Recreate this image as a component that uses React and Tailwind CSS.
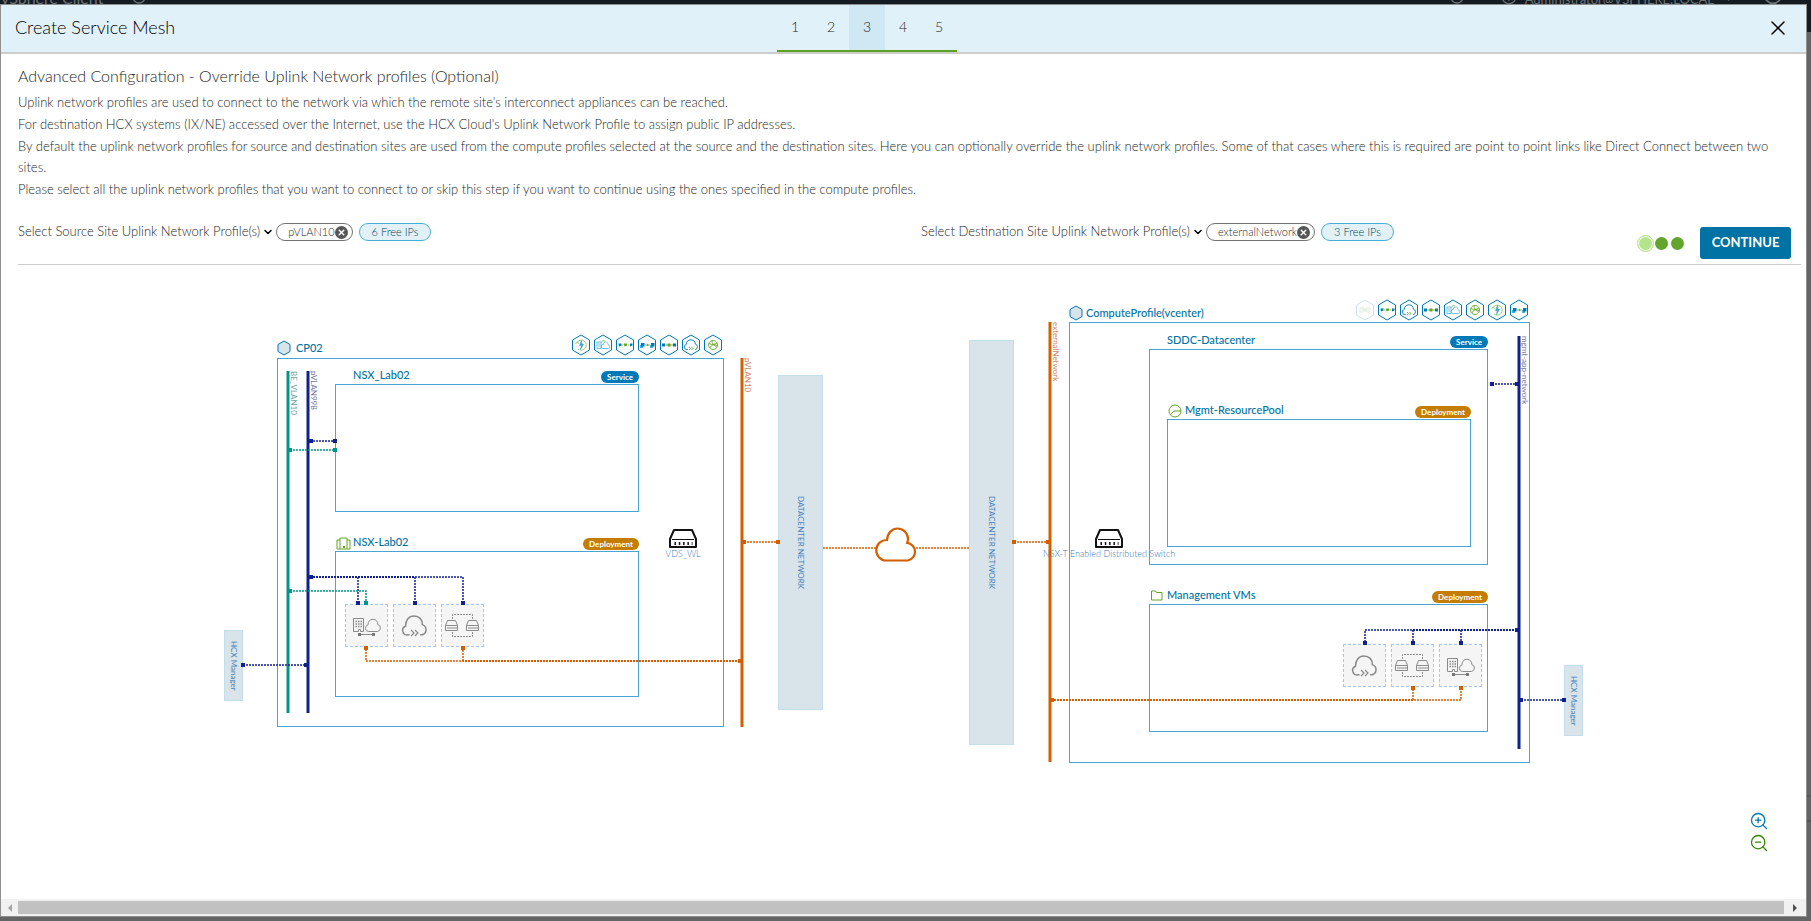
import React from "react";
import { ChevronDown, CircleHelp, RotateCw, Smile, ZoomIn, ZoomOut, X } from "lucide-react";

const STEPS = [1, 2, 3, 4, 5];
const ACTIVE_STEP = 3;

const NAVY = "#10218b";
const TEAL = "#00968b";
const ORANGE = "#d45f00";

// Topology data, in canvas pixels
const BOXES = [
  { id: "cp02", x: 53, y: 78, w: 447, h: 369 },
  { id: "nsx-service", x: 111, y: 104, w: 304, h: 128, badge: "Service" },
  { id: "nsx-deploy", x: 111, y: 271, w: 304, h: 146, badge: "Deployment" },
  { id: "compute", x: 845, y: 42, w: 461, h: 441 },
  { id: "sddc", x: 925, y: 69, w: 339, h: 216, badge: "Service" },
  { id: "pool", x: 943, y: 139, w: 304, h: 128, badge: "Deployment" },
  { id: "vms", x: 925, y: 324, w: 339, h: 128, badge: "Deployment" },
];

const TITLES = [
  { text: "CP02", x: 72, y: 60 },
  { text: "NSX_Lab02", x: 129, y: 87 },
  { text: "NSX-Lab02", x: 129, y: 254 },
  { text: "ComputeProfile(vcenter)", x: 862, y: 25 },
  { text: "SDDC-Datacenter", x: 943, y: 52 },
  { text: "Mgmt-ResourcePool", x: 961, y: 122 },
  { text: "Management VMs", x: 943, y: 307 },
];

const BLOCKS = [
  { id: "hcx-source", text: "HCX Manager", x: 0, y: 350, w: 19, h: 71 },
  { id: "dc-source", text: "DATACENTER NETWORK", x: 554, y: 95, w: 45, h: 335 },
  { id: "dc-target", text: "DATACENTER NETWORK", x: 745, y: 60, w: 45, h: 405 },
  { id: "hcx-target", text: "HCX Manager", x: 1340, y: 385, w: 19, h: 71 },
];

const TRUNKS = [
  { text: "BE_VLAN10", x: 64, y1: 91, y2: 433, color: TEAL, tone: "text-[#6f9f9c]" },
  { text: "pVLAN998", x: 84, y1: 91, y2: 433, color: NAVY, tone: "text-[#74789e]" },
  { text: "pVLAN10", x: 518, y1: 78, y2: 447, color: ORANGE, tone: "text-[#d3836a]" },
  { text: "externalNetwork", x: 826, y1: 42, y2: 482, color: ORANGE, tone: "text-[#d3836a]" },
  { text: "mgmt-app-network", x: 1295, y1: 56, y2: 469, color: NAVY, tone: "text-[#74789e]" },
];

const LINKS = [
  { d: "M86 161H111", color: NAVY, ends: [[87, 161], [111, 161]] },
  { d: "M66 170H111", color: TEAL, ends: [[66, 170], [111, 170]] },
  { d: "M86 297H239V323M134 297V323M191 297V323", color: NAVY, ends: [[87, 297], [134, 323], [191, 323], [239, 323]] },
  { d: "M66 311H142V323", color: TEAL, ends: [[66, 311], [142, 323]] },
  { d: "M516 381H142V368M239 381V368", color: ORANGE, ends: [[142, 368], [239, 368], [516, 381]] },
  { d: "M19 385H82", color: NAVY, ends: [[19, 385], [82, 385]] },
  { d: "M520 262H554", color: ORANGE, ends: [[520, 262], [554, 262]] },
  { d: "M599 268H653M692 268H746", color: ORANGE, ends: [] },
  { d: "M790 262H824", color: ORANGE, ends: [[790, 262], [824, 262]] },
  { d: "M1268 104H1294", color: NAVY, ends: [[1268, 104], [1293, 104]] },
  { d: "M1293 350H1141V363M1189 350V363M1237 350V363", color: NAVY, ends: [[1293, 350], [1141, 363], [1189, 363], [1237, 363]] },
  { d: "M827 420H1237V408M1189 420V408", color: ORANGE, ends: [[828, 420], [1189, 408], [1237, 408]] },
  { d: "M1297 420H1340", color: NAVY, ends: [[1297, 420], [1340, 420]] },
];

// Stretches shared by several links are drawn heavier
const SHARED = [
  { d: "M86 297H191", color: NAVY },
  { d: "M516 381H239", color: ORANGE },
  { d: "M1293 350H1189", color: NAVY },
  { d: "M827 420H1189", color: ORANGE },
];

const APPLIANCES = [
  { kind: "interconnect", x: 121, y: 324 },
  { kind: "wan", x: 169, y: 324 },
  { kind: "extension", x: 217, y: 324 },
  { kind: "wan", x: 1119, y: 364 },
  { kind: "extension", x: 1167, y: 364 },
  { kind: "interconnect", x: 1215, y: 364 },
];

const SWITCHES = [
  { text: "VDS_WL", x: 459, y: 249 },
  { text: "NSX-T Enabled Distributed Switch", x: 885, y: 249 },
];

const SOURCE_SERVICES = ["bolt", "hybrid", "link", "stack", "squares", "cloud", "globe"];
const TARGET_SERVICES = ["faded", "link", "cloud", "squares", "hybrid", "globe", "bolt", "stack"];

function ServiceGlyph({ kind }) {
  switch (kind) {
    case "bolt":
      return (
        <>
          <path d="M5 8.500A5 5 0 1 1 6 15M3.500 10 5 8l2 1.500" fill="none" stroke="#8cc466" strokeWidth="0.9" />
          <path d="M9.500 6.500 7.500 11.500h1.700L8.500 15.500 11.500 10H9.700z" fill="#49afd9" stroke="#0079b8" strokeWidth="0.4" />
        </>
      );
    case "hybrid":
      return (
        <>
          <path d="M3 8h4v6.500H3zM4 10h2M4 12h2M9 14.500a2 2 0 0 1 .3-4C9.500 8.500 10.500 8 11.700 8s2.300 1 2.300 2.700a2 2 0 0 1 .5 3.800z" fill="none" stroke="#49afd9" strokeWidth="0.8" />
          <path d="M7 8.500a3 3 0 0 1 4-1.500" fill="none" stroke="#8cc466" />
        </>
      );
    case "link":
      return (
        <>
          <path d="M4 11h11" stroke="#79b94b" strokeDasharray="1 1" />
          <path d="M2.500 9.500h3v2l-2.500 1zM14 9.500h2.500v2l-2.500 1z" fill="#0079b8" />
          <path d="M8 9.500h3v2l-2.500 1z" fill="#62a420" />
        </>
      );
    case "stack":
      return (
        <>
          <path d="M7 11h5" stroke="#79b94b" />
          <path d="M2 11h3v3H2zM12 11h3v3h-3z" fill="#49afd9" />
          <path d="M3 9h3.500v3.500H3zM13 9h3.500v3.500H13z" fill="#0079b8" />
          <path d="M9 9.500 10.500 11 9 12.500z" fill="#62a420" />
        </>
      );
    case "squares":
      return (
        <>
          <path d="M4 11h11" stroke="#62a420" strokeWidth="0.8" />
          <path d="M2 9.500h3v3H2zM13 9.500h3v3h-3z" fill="#0079b8" />
          <path d="M7.500 9.500h3v3h-3z" fill="#62a420" />
        </>
      );
    case "cloud":
      return (
        <>
          <path d="M6 15.500H5.200a2.600 2.600 0 0 1-.9-5.100C4.300 7.500 6.300 5.800 8.900 5.800s4.500 1.700 4.400 4.300a2.800 2.800 0 0 1 .2 5.400H13" fill="none" stroke="#0079b8" strokeWidth="0.9" />
          <path d="M7 13l1.500 1.500L7 16M9.500 13l1.500 1.500L9.500 16" fill="none" stroke="#62a420" strokeWidth="0.9" />
        </>
      );
    case "globe":
      return (
        <path
          d="M9 6.500a4.500 4.500 0 1 0 .1 0M5 9.500c3 1.500 5.500 1 8-.5M6 14c1-3 4-4 7-2.500M8 7c0 2 1 3.500 4.500 6"
          fill="none"
          stroke="#62a420"
          strokeWidth="0.9"
        />
      );
    default:
      return <path d="M4 9h4v4H4zM10 9h4v4h-4zM5 11h8" fill="none" stroke="#dbe9d6" strokeWidth="0.8" />;
  }
}

function ServiceIcon({ kind }) {
  const faded = kind === "faded";
  return (
    <svg viewBox="0 0 18 22" className="h-[22px] w-[18px]">
      <path d="M9 1 17.500 6v10L9 21 .5 16V6z" fill="#fff" stroke={faded ? "#c9e1ef" : "#0079b8"} />
      <ServiceGlyph kind={kind} />
    </svg>
  );
}

function ServiceRow({ kinds, style }) {
  return (
    <div className="absolute flex gap-1" style={style}>
      {kinds.map((kind) => (
        <ServiceIcon key={kind} kind={kind} />
      ))}
    </div>
  );
}

function MiniSwitch({ x }) {
  return (
    <g transform={`translate(${x} 15)`} fill="none" stroke="#8a8a8a">
      <path d="M2.500.5h8l2 5v5H.5v-5zM.5 5.500h12" />
      <path d="M2.500 8h9" strokeDasharray="1 1" strokeWidth="2" />
    </g>
  );
}

function Appliance({ kind, x, y }) {
  return (
    <div
      className="absolute size-[43px] border border-dashed border-[#a9c8f0] bg-[#f5f5f5]"
      style={{ left: x, top: y }}
    >
      <svg viewBox="0 0 41 41" className="size-full" fill="none" stroke="#8a8a8a">
        {kind === "interconnect" && (
          <>
            <path d="M7.500 26.500v-13h10v13h-3v-2h-2v2z" />
            <path d="M9.500 16.500h7M9.500 19h7M9.500 21.500h7" strokeDasharray="1.500 1" strokeWidth="1.500" />
            <path d="M22.500 26.500a3.300 3.300 0 0 1-.6-6.500C22 16.300 24 14.300 27 14.300s4.900 2.200 4.800 5.200a3.600 3.600 0 0 1-.3 7z" />
            <path d="M13 29.500h15" />
            <path d="M12 28h3v3h-3zM26 28h3v3h-3z" fill="#777" stroke="none" />
          </>
        )}
        {kind === "wan" && (
          <>
            <path
              d="M15.500 29.800H14a4.500 4.500 0 0 1-2.500-8.600C11.500 14.800 15 11 20 11s8.600 3.500 8.300 8.600a5.300 5.300 0 0 1-.3 10.200h-2"
              strokeWidth="1.500"
            />
            <path d="M17 25l3 3-3 3M21 25l3 3-3 3" strokeWidth="1.200" />
          </>
        )}
        {kind === "extension" && (
          <>
            <MiniSwitch x={3} />
            <MiniSwitch x={24} />
            <path d="M10.500 14V9.500h20V14M10.500 27v4.500h20V27" strokeDasharray="2 1" />
          </>
        )}
      </svg>
    </div>
  );
}

function SwitchNode({ text, x, y }) {
  return (
    <div className="absolute flex w-0 flex-col items-center" style={{ left: x, top: y }}>
      <svg viewBox="0 0 28 19" className="h-[19px] w-7 shrink-0" fill="none" stroke="#111">
        <path d="M5 1h18l4 9v8H1v-8z" strokeWidth="2" strokeLinejoin="round" />
        <path d="M3 10.500h22" />
        <path d="M5.500 14.500h18" strokeWidth="3" strokeDasharray="1.500 2.800" />
      </svg>
      <span className="text-[9px] leading-3 font-light whitespace-nowrap text-[#3a7bbb]">{text}</span>
    </div>
  );
}

function Badge({ kind }) {
  const tone = kind === "Service" ? "bg-[#0079b8]" : "bg-[#c47d00]";
  return (
    <span className={`absolute -top-[14px] -right-px rounded-full px-[6px] text-[8px] leading-3 font-bold text-white ${tone}`}>
      {kind}
    </span>
  );
}

function Hexagon({ x, y }) {
  return <path d={`M${x + 6} ${y}l6 3.500v7l-6 3.500-6-3.500v-7z`} fill="#d9e4ea" stroke="#0079b8" />;
}

function Topology() {
  return (
    <div className="relative h-[500px] w-[1359px] shrink-0">
      {BLOCKS.map((b) => (
        <div
          key={b.id}
          className="absolute flex items-center justify-center border border-[#c3dfec] bg-[#d9e4ea] text-[8px] leading-3 font-normal whitespace-nowrap text-[#4681b9] [writing-mode:vertical-rl]"
          style={{ left: b.x, top: b.y, width: b.w, height: b.h }}
        >
          {b.text}
        </div>
      ))}

      {BOXES.map((b) => (
        <div key={b.id} className="absolute border border-[#49a5d6]" style={{ left: b.x, top: b.y, width: b.w, height: b.h }}>
          {b.badge && <Badge kind={b.badge} />}
        </div>
      ))}

      {APPLIANCES.map((a) => (
        <Appliance key={`${a.kind}-${a.x}`} {...a} />
      ))}

      {SWITCHES.map((s) => (
        <SwitchNode key={s.text} text={s.text} x={s.x} y={s.y} />
      ))}

      {/* Trunks and links */}
      <svg viewBox="0 0 1359 500" className="absolute inset-0 size-full" fill="none">
        {TRUNKS.map((t) => (
          <path key={t.text} d={`M${t.x} ${t.y1}V${t.y2}`} stroke={t.color} strokeWidth="3" />
        ))}
        {LINKS.map((l) => (
          <g key={l.d}>
            <path d={l.d} stroke={l.color} strokeWidth="1.500" strokeDasharray="2 1" />
            {l.ends.map(([x, y]) => (
              <rect key={`${x}-${y}`} x={x - 2} y={y - 2} width="4" height="4" fill={l.color} />
            ))}
          </g>
        ))}
        {SHARED.map((s) => (
          <path key={s.d} d={s.d} stroke={s.color} strokeWidth="2" strokeDasharray="2 1" />
        ))}

        {/* Cloud between the two sites */}
        <path
          d="M662 280.500a9.800 9.800 0 0 1 1-20.500C663.500 253 668 248.500 673.500 248.500s10.500 4.500 10.500 10.500c0 1.500-.3 2.500-.8 3.800a9 9 0 0 1 .8 17.700z"
          fill="#fff"
          stroke={ORANGE}
          strokeWidth="2.200"
        />

        <Hexagon x={54} y={61} />
        <Hexagon x={846} y={26} />

        <g stroke="#62a420">
          <path d="M116 269v-11h7v11M116 260h-3v9h13v-9h-3" />
          <path d="M119 267h2" strokeWidth="2" />
          <circle cx="951" cy="131" r="6" />
          <path d="M946 135l4-4h7" />
          <path d="M927.500 320v-9h4l1 1.500h5.500v7.500z" />
        </g>
      </svg>

      {TRUNKS.map((t) => (
        <span
          key={t.text}
          className={`absolute text-[8px] leading-3 font-normal whitespace-nowrap [writing-mode:vertical-rl] ${t.tone}`}
          style={{ left: t.x, top: t.y1 }}
        >
          {t.text}
        </span>
      ))}

      {TITLES.map((t) => (
        <span
          key={t.text}
          className="absolute text-[11px] leading-4 font-medium whitespace-nowrap text-[#0072a3]"
          style={{ left: t.x, top: t.y }}
        >
          {t.text}
        </span>
      ))}

      <ServiceRow kinds={SOURCE_SERVICES} style={{ left: 348, top: 54 }} />
      <ServiceRow kinds={TARGET_SERVICES} style={{ left: 1132, top: 19 }} />
    </div>
  );
}

function ProfilePicker({ label, profile, freeIps }) {
  return (
    <div className="flex h-5 items-center">
      <button type="button" aria-haspopup="listbox" className="flex items-center gap-[2px]">
        {label}
        <ChevronDown className="size-3 text-black" strokeWidth={3} />
      </button>
      <span className="ml-[2px] flex h-[18px] items-center rounded-full border border-[#737373] pr-1 pl-[11px] text-[11px]">
        {profile}
        <button type="button" aria-label={`Remove ${profile}`} className="flex size-[13px] items-center justify-center rounded-full bg-[#565656] text-white">
          <X className="size-[9px]" strokeWidth={4} />
        </button>
      </span>
      <span className="ml-[6px] flex h-[18px] items-center rounded-full border border-[#49afd9] bg-[#e1f1f6] px-3 text-[11px] text-[#00435f]">
        {freeIps} Free IPs
      </span>
    </div>
  );
}

function BackdropBar() {
  return (
    <div className="absolute inset-x-0 top-0 h-8 bg-[#141b22]">
      <div className="flex h-[5px] items-end justify-between overflow-hidden pr-7 pl-px text-[#6b737a]">
        <span className="flex items-end gap-7 text-base leading-[14px] font-normal">
          vSphere Client
          <RotateCw className="size-4" />
        </span>
        <span className="flex items-end gap-2 text-[13px] leading-[11px] font-normal">
          <RotateCw className="size-4" />
          <CircleHelp className="ml-7 size-4" />
          Administrator@VSPHERE.LOCAL
          <ChevronDown className="size-[13px]" />
          <Smile className="ml-5 size-5" />
        </span>
      </div>
    </div>
  );
}

export default function App() {
  return (
    <div className="relative min-h-screen overflow-hidden bg-[#646464] pt-[5px] pr-[5px] pb-[5px] pl-px font-[Lato,sans-serif] text-[13px] font-light text-[#262626]">
      <BackdropBar />
      <div className="absolute inset-x-0 bottom-[99px] h-[27px] border-y-2 border-[#565656]" />

      <div role="dialog" aria-labelledby="wizard-title" className="relative flex min-h-[calc(100vh-10px)] flex-col bg-white shadow-[0_0_0_1px_#8f8f8f]">
        <header className="grid h-[49px] grid-cols-[43%_auto_1fr] border-b-2 border-[#ccc] bg-[#e1f1f9]">
          <h1 id="wizard-title" className="self-center pb-1 pl-[14px] text-lg font-light text-black">
            Create Service Mesh
          </h1>
          <nav className="flex border-b-2 border-[#5aa220]">
            {STEPS.map((step) => (
              <button
                key={step}
                type="button"
                className={step === ACTIVE_STEP ? "w-9 bg-[#d0e8f4] pb-0.5 text-sm" : "w-9 pb-0.5 text-sm"}
              >
                {step}
              </button>
            ))}
          </nav>
          <button type="button" aria-label="Close" className="mr-4 flex items-center self-center justify-self-end pb-0.5 text-black">
            <X className="size-6" strokeWidth={1.5} />
          </button>
        </header>

        <section className="pt-[10px] pr-[5px] pl-[17px]">
          <h2 className="text-base leading-6">Advanced Configuration - Override Uplink Network profiles (Optional)</h2>
          <div className="mt-1 space-y-px pr-5 leading-[21px]">
            <p>Uplink network profiles are used to connect to the network via which the remote site's interconnect appliances can be reached.</p>
            <p>For destination HCX systems (IX/NE) accessed over the Internet, use the HCX Cloud's Uplink Network Profile to assign public IP addresses.</p>
            <p>
              By default the uplink network profiles for source and destination sites are used from the compute profiles selected at the source and the
              destination sites. Here you can optionally override the uplink network profiles. Some of that cases where this is required are point to
              point links like Direct Connect between two sites.
            </p>
            <p>Please select all the uplink network profiles that you want to connect to or skip this step if you want to continue using the ones specified in the compute profiles.</p>
          </div>

          <div className="mt-[22px] flex border-b border-[#ccc] pb-[5px]">
            <div className="grid flex-1 grid-cols-[903px_1fr]">
              <ProfilePicker label="Select Source Site Uplink Network Profile(s)" profile="pVLAN10" freeIps={6} />
              <ProfilePicker label="Select Destination Site Uplink Network Profile(s)" profile="externalNetwork" freeIps={3} />
            </div>
            <div className="flex items-center pt-[5px] pr-[10px]">
              <span className="mr-px size-[17px] rounded-full border border-[#b5e58a] bg-[#b5e58a] ring-1 ring-white ring-inset" />
              <span className="mr-[3px] size-[13px] rounded-full bg-[#62a42c]" />
              <span className="mr-4 size-[13px] rounded-full bg-[#62a42c]" />
              <button type="button" className="h-8 w-[91px] rounded-[3px] bg-[#0072a3] text-[13px] font-bold text-white">
                CONTINUE
              </button>
            </div>
          </div>
        </section>

        <section className="relative flex flex-1 justify-center pt-[15px]">
          <Topology />
          <div className="absolute right-[37px] bottom-[46px] flex flex-col gap-[2px]">
            <button type="button" aria-label="Zoom in" className="text-[#0079b8]">
              <ZoomIn className="size-5" strokeWidth={1.6} />
            </button>
            <button type="button" aria-label="Zoom out" className="text-[#318700]">
              <ZoomOut className="size-5" strokeWidth={1.6} />
            </button>
          </div>
        </section>

        {/* Horizontal scrollbar */}
        <div className="flex h-[17px] items-center justify-between bg-[#f1f1f1]">
          <button type="button" aria-label="Scroll left" className="flex w-[17px] justify-center">
            <span className="border-y-4 border-r-4 border-y-transparent border-r-[#a3a3a3]" />
          </button>
          <div className="h-[13px] flex-1 bg-[#c1c1c1]" />
          <button type="button" aria-label="Scroll right" className="flex w-[22px] justify-center">
            <span className="border-y-4 border-l-4 border-y-transparent border-l-[#505050]" />
          </button>
        </div>
      </div>
    </div>
  );
}
